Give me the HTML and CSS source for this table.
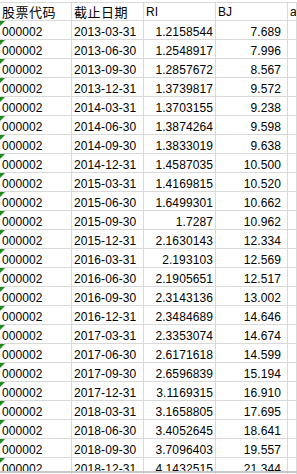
FILE: index.html
```html
<!DOCTYPE html>
<html lang="zh">
<head>
<meta charset="utf-8">
<link rel="stylesheet" href="styles.css">
</head>
<body>
<div class="sheet">
  <div class="row head">
    <div class="cell cjk">股票代码</div>
    <div class="cell cjk">截止日期</div>
    <div class="cell">RI</div>
    <div class="cell">BJ</div>
    <div class="cell">a</div>
  </div>
  <div class="row"><div class="cell code">000002</div><div class="cell">2013-03-31</div><div class="cell num">1.2158544</div><div class="cell num bj">7.689</div><div class="cell"></div></div>
  <div class="row"><div class="cell code">000002</div><div class="cell">2013-06-30</div><div class="cell num">1.2548917</div><div class="cell num bj">7.996</div><div class="cell"></div></div>
  <div class="row"><div class="cell code">000002</div><div class="cell">2013-09-30</div><div class="cell num">1.2857672</div><div class="cell num bj">8.567</div><div class="cell"></div></div>
  <div class="row"><div class="cell code">000002</div><div class="cell">2013-12-31</div><div class="cell num">1.3739817</div><div class="cell num bj">9.572</div><div class="cell"></div></div>
  <div class="row"><div class="cell code">000002</div><div class="cell">2014-03-31</div><div class="cell num">1.3703155</div><div class="cell num bj">9.238</div><div class="cell"></div></div>
  <div class="row"><div class="cell code">000002</div><div class="cell">2014-06-30</div><div class="cell num">1.3874264</div><div class="cell num bj">9.598</div><div class="cell"></div></div>
  <div class="row"><div class="cell code">000002</div><div class="cell">2014-09-30</div><div class="cell num">1.3833019</div><div class="cell num bj">9.638</div><div class="cell"></div></div>
  <div class="row"><div class="cell code">000002</div><div class="cell">2014-12-31</div><div class="cell num">1.4587035</div><div class="cell num bj">10.500</div><div class="cell"></div></div>
  <div class="row"><div class="cell code">000002</div><div class="cell">2015-03-31</div><div class="cell num">1.4169815</div><div class="cell num bj">10.520</div><div class="cell"></div></div>
  <div class="row"><div class="cell code">000002</div><div class="cell">2015-06-30</div><div class="cell num">1.6499301</div><div class="cell num bj">10.662</div><div class="cell"></div></div>
  <div class="row"><div class="cell code">000002</div><div class="cell">2015-09-30</div><div class="cell num">1.7287</div><div class="cell num bj">10.962</div><div class="cell"></div></div>
  <div class="row"><div class="cell code">000002</div><div class="cell">2015-12-31</div><div class="cell num">2.1630143</div><div class="cell num bj">12.334</div><div class="cell"></div></div>
  <div class="row"><div class="cell code">000002</div><div class="cell">2016-03-31</div><div class="cell num">2.193103</div><div class="cell num bj">12.569</div><div class="cell"></div></div>
  <div class="row"><div class="cell code">000002</div><div class="cell">2016-06-30</div><div class="cell num">2.1905651</div><div class="cell num bj">12.517</div><div class="cell"></div></div>
  <div class="row"><div class="cell code">000002</div><div class="cell">2016-09-30</div><div class="cell num">2.3143136</div><div class="cell num bj">13.002</div><div class="cell"></div></div>
  <div class="row"><div class="cell code">000002</div><div class="cell">2016-12-31</div><div class="cell num">2.3484689</div><div class="cell num bj">14.646</div><div class="cell"></div></div>
  <div class="row"><div class="cell code">000002</div><div class="cell">2017-03-31</div><div class="cell num">2.3353074</div><div class="cell num bj">14.674</div><div class="cell"></div></div>
  <div class="row"><div class="cell code">000002</div><div class="cell">2017-06-30</div><div class="cell num">2.6171618</div><div class="cell num bj">14.599</div><div class="cell"></div></div>
  <div class="row"><div class="cell code">000002</div><div class="cell">2017-09-30</div><div class="cell num">2.6596839</div><div class="cell num bj">15.194</div><div class="cell"></div></div>
  <div class="row"><div class="cell code">000002</div><div class="cell">2017-12-31</div><div class="cell num">3.1169315</div><div class="cell num bj">16.910</div><div class="cell"></div></div>
  <div class="row"><div class="cell code">000002</div><div class="cell">2018-03-31</div><div class="cell num">3.1658805</div><div class="cell num bj">17.695</div><div class="cell"></div></div>
  <div class="row"><div class="cell code">000002</div><div class="cell">2018-06-30</div><div class="cell num">3.4052645</div><div class="cell num bj">18.641</div><div class="cell"></div></div>
  <div class="row"><div class="cell code">000002</div><div class="cell">2018-09-30</div><div class="cell num">3.7096403</div><div class="cell num bj">19.557</div><div class="cell"></div></div>
  <div class="row"><div class="cell code">000002</div><div class="cell">2018-12-31</div><div class="cell num">4.1432515</div><div class="cell num bj">21.344</div><div class="cell"></div></div>
</div>
<div class="bottom-edge"></div>
</body>
</html>
```
FILE: styles.css
```css
html, body {
  margin: 0;
  padding: 0;
  background: #ffffff;
  width: 297px;
  height: 474px;
  overflow: hidden;
  position: relative;
}
.sheet {
  padding-top: 2px;
  font-family: "Liberation Sans", Arial, "Noto Sans CJK SC", sans-serif;
  font-size: 12px;
  letter-spacing: 0.1px;
  color: #000000;
}
.row {
  display: grid;
  grid-template-columns: 72px 72px 72px 72px 1fr;
  height: 19px;
  border-bottom: 1px solid #d9d9d9;
  box-sizing: border-box;
}
.row.head {
  border-top: 1px solid #d9d9d9;
  height: 19px;
}
.cell {
  position: relative;
  box-sizing: border-box;
  border-right: 1px solid #d9d9d9;
  padding: 4px 0 0 2px;
  line-height: 14px;
  white-space: nowrap;
  overflow: hidden;
}
.head .cell {
  padding-top: 2px;
  line-height: 14px;
}
.cjk {
  font-family: "Noto Sans CJK SC", "Liberation Sans", sans-serif;
  font-size: 13px;
  letter-spacing: 0.5px;
}
.num {
  text-align: right;
  padding-right: 2px;
}
.num.bj {
  padding-right: 6px;
}
.code::before {
  content: "";
  position: absolute;
  left: 0;
  top: 0;
  border-top: 5px solid #1e8c1e;
  border-right: 5px solid transparent;
}
.bottom-edge {
  position: absolute;
  left: 0;
  right: 0;
  bottom: 1px;
  height: 2px;
  background: #c8c8c8;
}
```
